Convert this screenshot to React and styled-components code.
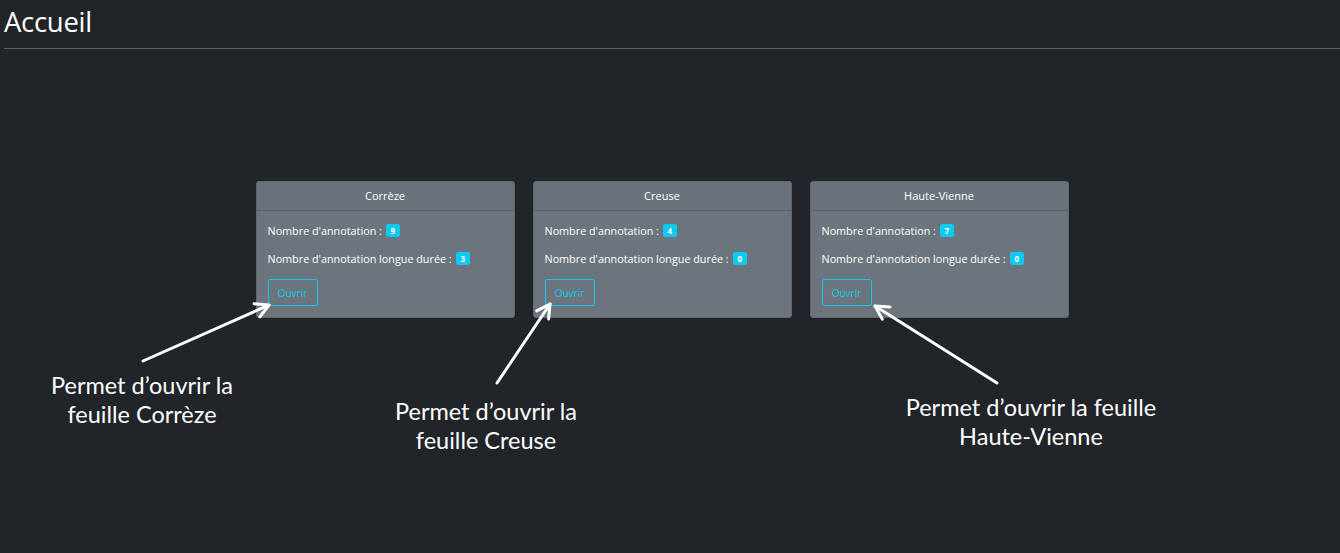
import styled, { createGlobalStyle } from "styled-components";

const Global = createGlobalStyle`
  html, body {
    margin: 0;
    background-color: #212529;
  }
`;

const Page = styled.div`
  position: relative;
  height: 553px;
  padding: 0 0 0 4px;
  color: #ffffff;
  font-family: "Open Sans", "Noto Sans", sans-serif;
  overflow: hidden;
`;

const Title = styled.h1`
  margin: 0;
  padding-top: 4px;
  font-size: 27.5px;
  font-weight: 400;
  line-height: 36px;
  letter-spacing: -0.3px;
`;

const Divider = styled.hr`
  margin: 8px 0 0 0;
  border: 0;
  border-top: 1px solid #5d6166;
`;

const CardRow = styled.div`
  display: flex;
  justify-content: center;
  gap: 18px;
  margin-top: 132px;
  padding-right: 20px;
`;

const Card = styled.div`
  width: 259px;
  height: 137px;
  box-sizing: border-box;
  background-color: #6c757d;
  border: 1px solid #5f676e;
  border-radius: 3px;
  overflow: hidden;
`;

const CardHeader = styled.div`
  height: 28px;
  line-height: 28px;
  text-align: center;
  font-size: 11px;
  border-bottom: 1px solid #5b636a;
  background-color: #6a737b;
`;

const CardBody = styled.div`
  padding: 10px 11px 0 11px;
  font-size: 10.8px;
`;

const Line = styled.div`
  display: flex;
  align-items: center;
  gap: 4px;
  height: 18px;
  margin-bottom: 10px;
`;

const Badge = styled.span`
  display: inline-block;
  min-width: 14px;
  height: 13px;
  line-height: 13px;
  padding: 0 2px;
  box-sizing: border-box;
  text-align: center;
  background-color: #0dcaf0;
  color: #ffffff;
  font-size: 8px;
  font-weight: 700;
  border-radius: 2px;
`;

const OutlineButton = styled.button`
  margin-top: 2px;
  width: 50px;
  height: 27px;
  background: transparent;
  border: 1px solid #0dcaf0;
  border-radius: 2px;
  color: #0dcaf0;
  font-family: "Open Sans", "Noto Sans", sans-serif;
  font-size: 10px;
  padding: 0;
`;

const Arrows = styled.svg`
  position: absolute;
  left: 0;
  top: 0;
  width: 1340px;
  height: 553px;
  pointer-events: none;
`;

const Note = styled.div`
  position: absolute;
  left: ${(p) => p.$x}px;
  top: ${(p) => p.$y}px;
  transform: translateX(-50%);
  white-space: nowrap;
  text-align: center;
  font-family: Lato, "Liberation Sans", sans-serif;
  font-size: 23.5px;
  line-height: 29px;
  color: #ffffff;
`;

const regions = [
  { name: "Corrèze", total: 9, longue: 3 },
  { name: "Creuse", total: 4, longue: 0 },
  { name: "Haute-Vienne", total: 7, longue: 0 },
];

const notes = [
  { x: 142, y: 371, lines: ["Permet d’ouvrir la", "feuille Corrèze"] },
  { x: 486, y: 397, lines: ["Permet d’ouvrir la", "feuille Creuse"] },
  { x: 1031, y: 393, lines: ["Permet d’ouvrir la feuille", "Haute-Vienne"] },
];

const arrows = [
  { x1: 143, y1: 361, x2: 269, y2: 305 },
  { x1: 497, y1: 383, x2: 550, y2: 304 },
  { x1: 997, y1: 383, x2: 875, y2: 306 },
];

function ArrowLine({ x1, y1, x2, y2 }) {
  const a = Math.atan2(y2 - y1, x2 - x1);
  const len = 15;
  const spread = 0.5;
  const p1 = [x2 - len * Math.cos(a - spread), y2 - len * Math.sin(a - spread)];
  const p2 = [x2 - len * Math.cos(a + spread), y2 - len * Math.sin(a + spread)];
  return (
    <g stroke="#ffffff" strokeWidth="3" fill="none" strokeLinecap="round" strokeLinejoin="round">
      <line x1={x1} y1={y1} x2={x2} y2={y2} />
      <polyline points={`${p1[0]},${p1[1]} ${x2},${y2} ${p2[0]},${p2[1]}`} />
    </g>
  );
}

export default function App() {
  return (
    <>
      <Global />
      <Page>
        <Title>Accueil</Title>
        <Divider />
        <CardRow>
          {regions.map((r) => (
            <Card key={r.name}>
              <CardHeader>{r.name}</CardHeader>
              <CardBody>
                <Line>
                  Nombre d'annotation : <Badge>{r.total}</Badge>
                </Line>
                <Line>
                  Nombre d'annotation longue durée : <Badge>{r.longue}</Badge>
                </Line>
                <OutlineButton>Ouvrir</OutlineButton>
              </CardBody>
            </Card>
          ))}
        </CardRow>
        <Arrows viewBox="0 0 1340 553">
          {arrows.map((a, i) => (
            <ArrowLine key={i} {...a} />
          ))}
        </Arrows>
        {notes.map((n, i) => (
          <Note key={i} $x={n.x} $y={n.y}>
            {n.lines.map((l) => (
              <div key={l}>{l}</div>
            ))}
          </Note>
        ))}
      </Page>
    </>
  );
}
